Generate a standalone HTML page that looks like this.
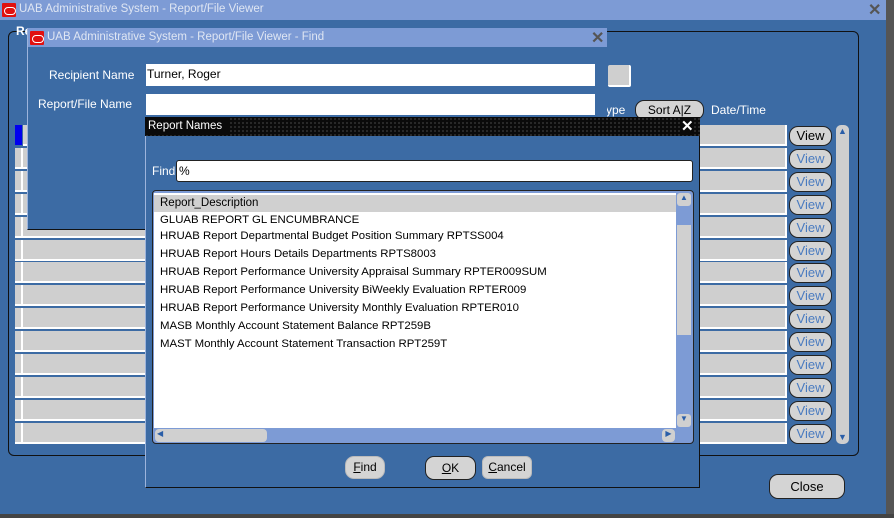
<!DOCTYPE html>
<html><head><style>
*{margin:0;padding:0;box-sizing:border-box}
body{width:894px;height:518px;background:#3c6ba4;position:relative;overflow:hidden;font-family:"Liberation Sans",Arial,sans-serif;font-size:12px;color:#000}
.a{position:absolute}
.tb{background:#7d9bd5;color:#dfe6f3;font-size:12px;line-height:18px}
.logo{position:absolute;width:14px;height:14px;background:#e01010;border-radius:1px}
.logo:after{content:"";position:absolute;left:2px;top:4px;width:10px;height:6px;border:1.5px solid #fff;border-radius:4px}
.fld{background:#cfcfcf;border-right:2px solid #fff;border-bottom:2px solid #fff}
.btn{background:#d4d4d4;border:1px solid #222;border-radius:9px;text-align:center;line-height:18px;font-size:12px}
.view{color:#4a7bc0}
.w{color:#fff}
.x{font-size:16px;color:#555;font-weight:bold}
</style></head><body>
<div class="a tb" style="left:0;top:0;width:886px;height:20px;"></div>
<div class="logo" style="left:2px;top:3px"></div>
<div class="a" style="left:19px;top:3px;color:#dfe6f3;font-size:11.5px">UAB Administrative System - Report/File Viewer</div>
<div class="a x" style="left:868px;top:0px">✕</div>
<div class="a" style="left:886px;top:0;width:8px;height:518px;background:#555"></div>
<div class="a" style="left:0;top:514px;width:894px;height:4px;background:#444"></div>
<div class="a" style="left:8px;top:31px;width:851px;height:425px;border:1px solid #111;border-radius:6px"></div>
<div class="a w" style="left:16px;top:24px;font-weight:bold">Re</div>
<div class="a" style="left:15px;top:125px;width:7px;height:20px;background:#0000ee"></div>
<div id="rows"></div>
<div class="a fld" style="left:608px;top:65px;width:23px;height:22px;border-radius:2px"></div>
<div class="a w" style="left:606px;top:103px">ype</div>
<div class="btn a" style="left:635px;top:100px;width:69px;height:20px">Sort A|Z</div>
<div class="a w" style="left:711px;top:103px">Date/Time</div>
<div class="a" style="left:836px;top:125px;width:13px;height:319px;background:#cfcfcf;border-radius:5px"></div>
<div class="a" style="left:838px;top:126px;font-size:9px;color:#2a5ea8">▲</div>
<div class="a" style="left:838px;top:432px;font-size:9px;color:#2a5ea8">▼</div>
<div class="btn a" style="left:769px;top:474px;width:76px;height:25px;line-height:23px;font-size:13px">Close</div>
<div class="a" style="left:27px;top:28px;width:580px;height:202px;background:#3c6ba4;border-left:1px solid #9db4dc;border-bottom:1px solid #111"></div>
<div class="a tb" style="left:28px;top:28px;width:579px;height:19px"></div>
<div class="logo" style="left:30px;top:31px"></div>
<div class="a" style="left:47px;top:31px;color:#dfe6f3;font-size:11.5px">UAB Administrative System - Report/File Viewer - Find</div>
<div class="a x" style="left:591px;top:28px">✕</div>
<div class="a w" style="left:49px;top:68px">Recipient Name</div>
<div class="a w" style="left:38px;top:97px">Report/File Name</div>
<div class="a" style="left:146px;top:64px;width:449px;height:22px;background:#fff;padding:3px 1px;font-size:12px">Turner, Roger</div>
<div class="a" style="left:146px;top:94px;width:449px;height:21px;background:#fff"></div>
<div class="a" style="left:145px;top:117px;width:555px;height:371px;background:#3c6ba4;border:1px solid #111;border-left-color:#9db4dc"></div>
<div class="a" style="left:145px;top:117px;width:555px;height:19px;background:#0a0a0a;background-image:radial-gradient(#777 0.6px,transparent 0.8px);background-size:4px 4px"></div>
<div class="a" style="left:146px;top:118px;width:82px;height:17px;background:#0a0a0a;color:#fff;line-height:17px;padding-left:2px;font-size:11.5px">Report Names</div>
<div class="a" style="left:681px;top:117px;color:#fff;font-size:15px;font-weight:bold;background:#0a0a0a">✕</div>
<div class="a w" style="left:152px;top:164px">Find</div>
<div class="a" style="left:176px;top:160px;width:517px;height:22px;background:#fff;border:1px solid #222;border-radius:3px;padding:3px 2px">%</div>
<div class="a" style="left:152px;top:190px;width:542px;height:254px;background:#7d9bd5;border:1px solid #222;border-radius:4px"></div>
<div class="a" style="left:154px;top:193px;width:522px;height:235px;background:#fff"></div>
<div class="a" style="left:154px;top:195px;width:522px;height:17px;background:#d0d0d0;padding:2px 6px;font-size:11.5px">Report_Description</div>
<div class="a" style="left:160px;top:214px;font-size:11.4px">GLUAB REPORT GL ENCUMBRANCE</div>
<div class="a" style="left:160px;top:227px;line-height:18px;font-size:11.4px">HRUAB Report Departmental Budget Position Summary RPTSS004<br>HRUAB Report Hours Details Departments RPTS8003<br>HRUAB Report Performance University Appraisal Summary RPTER009SUM<br>HRUAB Report Performance University BiWeekly Evaluation RPTER009<br>HRUAB Report Performance University Monthly Evaluation RPTER010<br>MASB Monthly Account Statement Balance RPT259B<br>MAST Monthly Account Statement Transaction RPT259T</div>
<div class="a" style="left:677px;top:193px;width:14px;height:236px;background:#7d9bd5"></div>
<div class="a" style="left:677px;top:193px;width:14px;height:13px;background:#d0d0d0;border-radius:3px;font-size:8px;text-align:center;color:#2a5ea8">▲</div>
<div class="a" style="left:677px;top:225px;width:14px;height:110px;background:#d0d0d0"></div>
<div class="a" style="left:677px;top:414px;width:14px;height:13px;background:#d0d0d0;border-radius:3px;font-size:8px;text-align:center;color:#2a5ea8">▼</div>
<div class="a" style="left:155px;top:429px;width:112px;height:13px;background:#d0d0d0;border-radius:4px"></div>
<div class="a" style="left:157px;top:429px;font-size:8px;color:#2a5ea8">◀</div>
<div class="a" style="left:662px;top:429px;width:13px;height:13px;background:#d0d0d0;border-radius:4px;font-size:8px;color:#2a5ea8;text-align:center">▶</div>
<div class="btn a" style="left:345px;top:456px;width:40px;height:23px;line-height:21px;border-color:#bbb"><u>F</u>ind</div>
<div class="btn a" style="left:425px;top:456px;width:51px;height:24px;line-height:22px"><u>O</u>K</div>
<div class="btn a" style="left:482px;top:456px;width:50px;height:23px;line-height:21px;border-radius:6px;border-color:#bbb"><u>C</u>ancel</div>
<script>
var h='';
for(var i=0;i<14;i++){var y=125+i*22.9;
if(i>0)h+='<div class="a fld" style="left:15px;top:'+y+'px;width:8px;height:21px"></div>';
h+='<div class="a fld" style="left:23px;top:'+y+'px;width:124px;height:21px"></div>';
h+='<div class="a fld" style="left:699px;top:'+y+'px;width:88px;height:21px"></div>';
h+='<div class="btn a'+(i>0?' view':'')+'" style="left:789px;top:'+(y+1)+'px;width:43px;height:20px;font-size:13px">View</div>';}
document.getElementById('rows').outerHTML=h;
</script>
</body></html>
